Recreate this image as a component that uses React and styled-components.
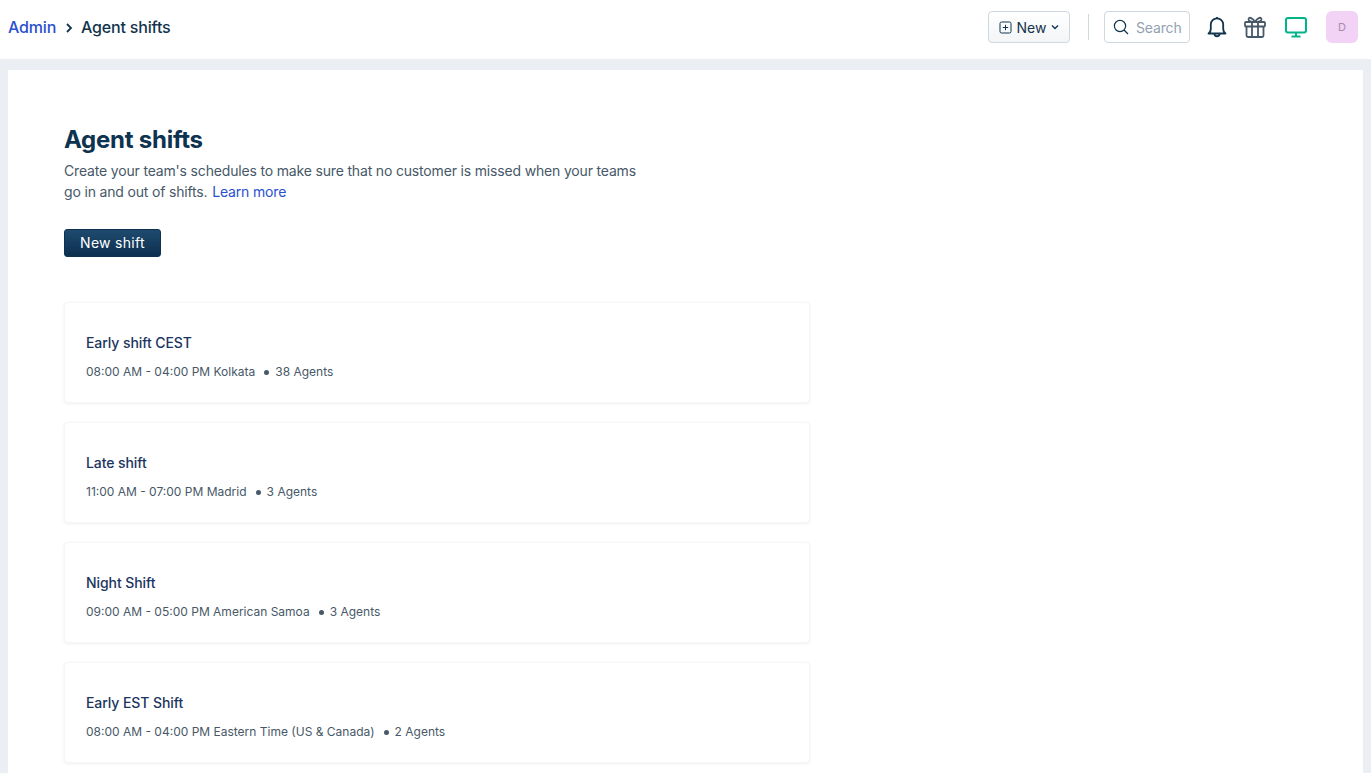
import React from "react";
import styled, { createGlobalStyle } from "styled-components";

const GlobalStyle = createGlobalStyle`
  html, body {
    margin: 0;
    height: 773px;
    overflow: hidden;
    background: #ebeff3;
    font-family: Inter, "Liberation Sans", sans-serif;
  }
`;

const TopBar = styled.header`
  height: 59px;
  box-sizing: border-box;
  background: #fff;
  display: flex;
  align-items: center;
  justify-content: space-between;
  padding: 0 13px 5px 8px;
`;

const Crumbs = styled.nav`
  display: flex;
  align-items: center;
  font-size: 16px;
  font-weight: 500;
  letter-spacing: -0.18px;
  color: #12344d;
`;

const CrumbLink = styled.a`
  color: #2a4fcf;
  font-weight: 500;
`;

const CrumbSep = styled.svg`
  width: 8px;
  height: 10px;
  margin: 1px 8px 0 9px;
`;

const Actions = styled.div`
  display: flex;
  align-items: center;
`;

const NewButton = styled.button`
  width: 82px;
  height: 32px;
  box-sizing: border-box;
  display: flex;
  align-items: center;
  justify-content: center;
  gap: 5px;
  padding: 0;
  border: 1px solid #cfd7df;
  border-radius: 4px;
  background: linear-gradient(180deg, #ffffff, #f3f5f7);
  color: #12344d;
  font: 400 14px Inter, "Liberation Sans", sans-serif;
`;

const Divider = styled.div`
  width: 1px;
  height: 26px;
  background: #cfd7df;
  margin: 0 15px 0 18px;
`;

const SearchBox = styled.div`
  width: 86px;
  height: 32px;
  box-sizing: border-box;
  display: flex;
  align-items: center;
  gap: 7px;
  padding-left: 8px;
  border: 1px solid #cfd7df;
  border-radius: 4px;
  color: #92a2b1;
  font-size: 14px;
  letter-spacing: -0.15px;
`;

const IconSlot = styled.div`
  display: flex;
  align-items: center;
  margin-left: ${({ $gap }) => $gap}px;
`;

const Avatar = styled.div`
  width: 32px;
  height: 32px;
  margin-left: 19px;
  border-radius: 6px;
  background: #f2d3f5;
  color: #a78bad;
  font-size: 11px;
  display: flex;
  align-items: center;
  justify-content: center;
`;

const Panel = styled.main`
  margin: 11px 8px 0;
  background: #fff;
  padding: 56px;
  height: 710px;
  box-sizing: border-box;
`;

const Title = styled.h1`
  margin: 0;
  font-size: 24px;
  line-height: 28px;
  font-weight: 700;
  letter-spacing: -0.25px;
  color: #0d3350;
`;

const Intro = styled.p`
  margin: 6px 0 0;
  width: 590px;
  font-size: 14px;
  line-height: 21px;
  letter-spacing: -0.17px;
  color: #475867;
`;

const LearnMore = styled.a`
  color: #2a4fcf;
  margin-left: 1px;
`;

const PrimaryButton = styled.button`
  display: block;
  margin-top: 27px;
  width: 97px;
  height: 28px;
  padding: 0 0 1px;
  border: 1px solid #0f3150;
  border-radius: 3px;
  background: linear-gradient(180deg, #1f4a6e, #0c2f4f);
  color: #fff;
  font: 400 14px Inter, "Liberation Sans", sans-serif;
  letter-spacing: 0.3px;
`;

const ShiftList = styled.div`
  margin-top: 45px;
  width: 746px;
  display: flex;
  flex-direction: column;
  gap: 19px;
`;

const ShiftCard = styled.article`
  height: 101px;
  box-sizing: border-box;
  padding: 32px 21px 0;
  border: 1px solid #f5f6f8;
  border-radius: 4px;
  box-shadow: 0 1px 3px rgba(18, 52, 77, 0.08);
  background: #fff;
`;

const ShiftName = styled.div`
  font-size: 14px;
  line-height: 16px;
  font-weight: 500;
  letter-spacing: -0.08px;
  color: #1b3560;
`;

const ShiftMeta = styled.div`
  margin-top: 13px;
  display: flex;
  align-items: center;
  font-size: 12px;
  line-height: 16px;
  color: #475867;
`;

const Dot = styled.span`
  width: 5px;
  height: 5px;
  margin: 1px 6px 0 9px;
  border-radius: 50%;
  background: #475867;
`;

const shifts = [
  { name: "Early shift CEST", time: "08:00 AM - 04:00 PM Kolkata", agents: "38 Agents" },
  { name: "Late shift", time: "11:00 AM - 07:00 PM Madrid", agents: "3 Agents" },
  { name: "Night Shift", time: "09:00 AM - 05:00 PM American Samoa", agents: "3 Agents" },
  { name: "Early EST Shift", time: "08:00 AM - 04:00 PM Eastern Time (US & Canada)", agents: "2 Agents" },
];

const App = () => {
  return (
    <>
      <GlobalStyle />
      <TopBar>
        <Crumbs>
          <CrumbLink>Admin</CrumbLink>
          <CrumbSep viewBox="0 0 8 10" fill="none" stroke="#12344d" strokeWidth="1.8">
            <path d="M2 1l4 4-4 4" />
          </CrumbSep>
          Agent shifts
        </Crumbs>
        <Actions>
          <NewButton>
            <svg width="13" height="13" viewBox="0 0 13 13" fill="none" stroke="#12344d" strokeWidth="1">
              <rect x="1" y="1" width="11" height="11" rx="1.5" />
              <path d="M6.5 3.8v5.4M3.8 6.5h5.4" />
            </svg>
            New
            <svg width="8" height="6" viewBox="0 0 8 6" fill="none" stroke="#12344d" strokeWidth="1.4">
              <path d="M1 1.5l3 3 3-3" />
            </svg>
          </NewButton>
          <Divider />
          <SearchBox>
            <svg width="16" height="16" viewBox="0 0 16 16" fill="none" stroke="#12344d" strokeWidth="1.2">
              <circle cx="7" cy="7" r="5.6" />
              <path d="M11 11l4 4" />
            </svg>
            Search
          </SearchBox>
          <IconSlot $gap={17}>
            <svg width="20" height="22" viewBox="0 0 20 22" fill="none" stroke="#12344d" strokeWidth="1.8">
              <path d="M1.5 17.5c1.5-1 2.3-2.500 2.300-5V8.500a6.200 6.200 0 0 1 12.400 0v4c0 2.500.8 4 2.300 5z" strokeLinejoin="round" />
              <path d="M7.500 18c0 3 5 3 5 0" />
              <path d="M10 2.300V1" />
            </svg>
          </IconSlot>
          <IconSlot $gap={17}>
            <svg width="22" height="22" viewBox="0 0 22 22" fill="none" stroke="#475867" strokeWidth="1.8">
              <rect x="1" y="6" width="20" height="4.500" rx="1" />
              <path d="M2.500 10.500V19.500a1.500 1.500 0 0 0 1.500 1.500h14a1.500 1.500 0 0 0 1.500-1.500V10.500" />
              <path d="M8 6v15M14 6v15" />
              <path d="M11 6C9 2 5 .5 4.500 3c-.4 2 3 3 6.500 3zM11 6c2-4 6-5.500 6.500-3 .4 2-3 3-6.500 3z" />
            </svg>
          </IconSlot>
          <IconSlot $gap={19}>
            <svg width="22" height="21" viewBox="0 0 22 21" fill="none" stroke="#00b48a" strokeWidth="2">
              <rect x="1" y="1" width="20" height="14.500" rx="2" />
              <path d="M11 15.500V19M6.500 19.500h9" />
            </svg>
          </IconSlot>
          <Avatar>D</Avatar>
        </Actions>
      </TopBar>
      <Panel>
        <Title>Agent shifts</Title>
        <Intro>
          Create your team's schedules to make sure that no customer is missed when your teams go in and
          out of shifts. <LearnMore>Learn more</LearnMore>
        </Intro>
        <PrimaryButton>New shift</PrimaryButton>
        <ShiftList>
          {shifts.map((shift) => (
            <ShiftCard key={shift.name}>
              <ShiftName>{shift.name}</ShiftName>
              <ShiftMeta>
                {shift.time}
                <Dot />
                {shift.agents}
              </ShiftMeta>
            </ShiftCard>
          ))}
        </ShiftList>
      </Panel>
    </>
  );
};

export default App;
